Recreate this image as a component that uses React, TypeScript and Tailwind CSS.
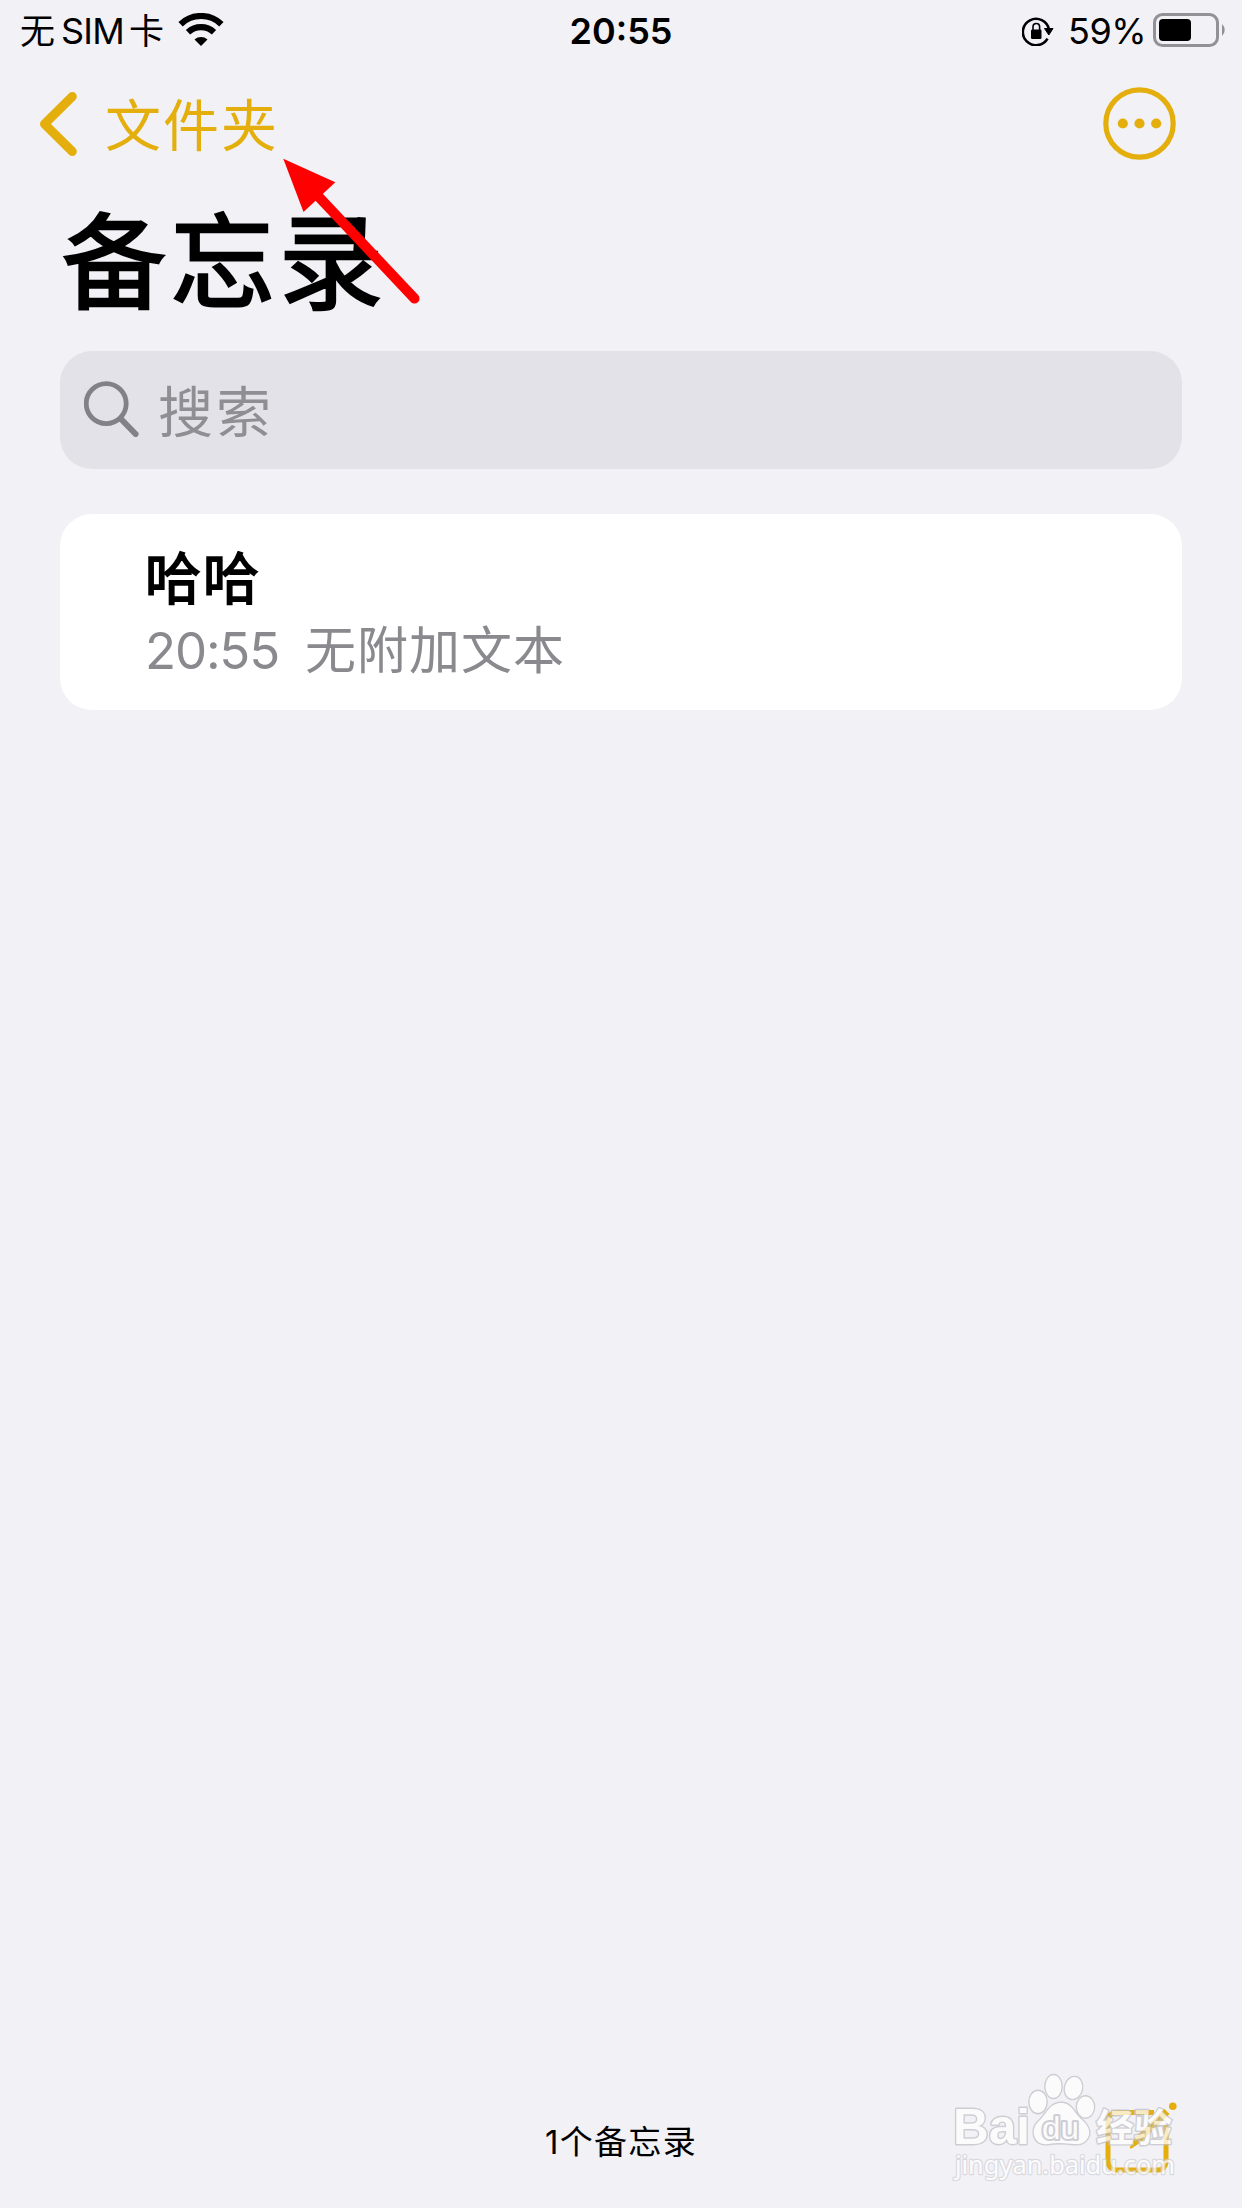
const StatusBar = () => {
	return (
		<div className="relative flex h-[62px] w-full items-center justify-between pl-5 pr-[15px] text-black">
			<div className="flex items-center">
				<span className="pt-px text-[35px] leading-none">无</span>
				<span className="ml-[6px] text-[36px] leading-none tracking-[-0.8px]">SIM</span>
				<span className="ml-[5px] pt-px text-[35px] leading-none">卡</span>
				<svg className="ml-[14px] -mt-[2px]" width="46" height="34" viewBox="0 0 46 34">
					<path d="M2.6 11.2a29.5 29.5 0 0 1 40.8 0" fill="none" stroke="#000" strokeWidth="6.2" />
					<path d="M10 19.2a19 19 0 0 1 26 0" fill="none" stroke="#000" strokeWidth="6.2" />
					<path d="M16.5 26.4a10.4 10.4 0 0 1 13 0L23 33Z" fill="#000" />
				</svg>
			</div>
			<div className="flex items-center">
				<svg width="32" height="30" viewBox="0 0 32 30">
					<path d="M25.5 22.6A13.2 13.2 0 1 1 27 13.5" fill="none" stroke="#000" strokeWidth="2.6" />
					<path d="M22.5 12.5H31L26.8 19Z" fill="#000" stroke="#000" strokeLinejoin="round" />
					<rect x="9" y="13.5" width="10.5" height="9.5" rx="1.2" fill="#000" />
					<path d="M11 14v-3.2a3.3 3.3 0 0 1 6.6 0V14" fill="none" stroke="#000" strokeWidth="1.6" />
				</svg>
				<span className="ml-[14px] w-[79px] whitespace-nowrap text-[36px] leading-none tracking-[-0.5px]">
					59%
				</span>
				<svg className="ml-[6px] -mt-[2px]" width="74" height="34" viewBox="0 0 74 34">
					<rect x="1.5" y="1.5" width="63" height="31" rx="8" fill="none" stroke="#929195" strokeWidth="3" />
					<rect x="6" y="6" width="32" height="22" rx="4" fill="#000" />
					<path d="M69 11v12a8 8 0 0 0 0-12Z" fill="#929195" />
				</svg>
			</div>
			<span className="absolute left-1/2 top-1/2 -translate-x-1/2 -translate-y-1/2 text-[36px] font-semibold leading-none">
				20:55
			</span>
		</div>
	);
};

const NavBar = () => {
	return (
		<div className="flex h-[124px] items-center justify-between pl-10 pr-[66px] text-[#e4af0c]">
			<div className="flex items-center">
				<svg width="38" height="64" viewBox="0 0 38 64">
					<path
						d="M32.3 4.5 4.5 32l27.8 27.5"
						fill="none"
						stroke="currentColor"
						strokeWidth="9"
						strokeLinecap="round"
						strokeLinejoin="round"
					/>
				</svg>
				<span className="ml-[27px] pt-[4px] text-[56px] leading-none tracking-[2px]">文件夹</span>
			</div>
			<svg className="-mt-px" width="73" height="73" viewBox="0 0 73 73">
				<circle cx="36.5" cy="36.5" r="33.7" fill="none" stroke="currentColor" strokeWidth="5.2" />
				<circle cx="19.8" cy="36.5" r="5.1" fill="currentColor" />
				<circle cx="36.5" cy="36.5" r="5.1" fill="currentColor" />
				<circle cx="53.2" cy="36.5" r="5.1" fill="currentColor" />
			</svg>
		</div>
	);
};

const Pointer = () => {
	return (
		<svg className="absolute left-[280px] top-[155px]" width="144" height="152" viewBox="0 0 144 152">
			<path d="m3.3 3.8 52 23.5L23.5 57Z" fill="#f00" />
			<path d="M38 41 134.5 143.5" stroke="#f00" strokeWidth="10" strokeLinecap="round" />
		</svg>
	);
};

const Watermark = () => {
	return (
		<svg className="absolute left-[930px] top-[2050px] opacity-75" width="270" height="158" viewBox="0 0 270 158">
			<g
				fill="#fff"
				stroke="#c2c2c8"
				strokeWidth="2.8"
				strokeLinejoin="round"
				paintOrder="stroke"
				fontFamily="'Liberation Sans', 'Noto Sans CJK SC', sans-serif"
			>
				<ellipse cx="108" cy="52" rx="8.5" ry="11" />
				<ellipse cx="123.5" cy="36.5" rx="8" ry="11.3" />
				<ellipse cx="143.5" cy="38" rx="8.5" ry="11" transform="rotate(12 143.5 38)" />
				<ellipse cx="155.5" cy="57" rx="8.5" ry="10.5" />
				<path d="M131 53c-11 0-14 10-20 16-6 5-8 10-7 15 1 8 7 11 14 10 6-1 9-1 13-1s8 1 14 1c7 1 12-3 14-9 1-6-2-11-8-16-7-6-9-16-20-16Z" />
				<text x="23" y="93.5" fontSize="50" fontWeight="700" textLength="77" lengthAdjust="spacingAndGlyphs">
					Bai
				</text>
				<text
					x="112"
					y="89"
					fontSize="32"
					strokeWidth="4"
					textLength="37"
					lengthAdjust="spacingAndGlyphs"
				>
					du
				</text>
				<text x="166" y="91" fontSize="38" fontWeight="700" textLength="76" lengthAdjust="spacingAndGlyphs">
					经验
				</text>
				<text
					x="25"
					y="123.5"
					fontSize="25"
					strokeWidth="2.4"
					stroke="#d2d2d7"
					fontFamily="'Noto Sans', sans-serif"
					textLength="220"
					lengthAdjust="spacingAndGlyphs"
				>
					jingyan.baidu.com
				</text>
			</g>
		</svg>
	);
};

const App = () => {
	return (
		<div className="relative flex h-[2208px] w-[1242px] flex-col overflow-hidden bg-[#f2f1f6] font-[Inter,'Noto_Sans_CJK_SC',sans-serif]">
			<StatusBar />
			<NavBar />
			<h1 className="flex h-[150px] items-center pl-[62px] pt-[3px] text-[104px] font-normal leading-none tracking-[4.5px] text-black [-webkit-text-stroke:2.6px_black]">
				备忘录
			</h1>

			<div className="mx-[60px] mt-[15px] flex h-[118px] items-center rounded-[32px] bg-[#e3e2e8] pl-6">
				<svg className="-mt-[2px]" width="56" height="56" viewBox="0 0 56 56">
					<circle cx="22.2" cy="22.6" r="20" fill="none" stroke="#828187" strokeWidth="4.8" />
					<path d="M37 38 51.6 53" stroke="#828187" strokeWidth="6" strokeLinecap="round" />
				</svg>
				<span className="ml-[18px] pt-[4px] text-[55px] leading-none tracking-[3px] text-[#8f8e93]">搜索</span>
			</div>

			<div className="mx-[60px] mt-[45px] flex h-[196px] flex-col rounded-[32px] bg-white pl-[85px] pt-[35px]">
				<p className="text-[56px] font-normal leading-[60px] tracking-[2px] text-black [-webkit-text-stroke:1.8px_black]">
					哈哈
				</p>
				<p className="mt-3 flex text-[51px] leading-[60px] text-[#8a898e]">
					<span className="w-[160px] tracking-[-1.2px]">20:55</span>
					<span className="tracking-[1px]">无附加文本</span>
				</p>
			</div>

			<div className="mt-auto flex h-[134px] items-center justify-center pt-[3px] text-[33px] leading-none tracking-[1.3px] text-black">
				1个备忘录
			</div>
			<svg className="absolute left-[1100px] top-[2098px]" width="82" height="80" viewBox="0 0 82 80">
				<path
					d="M54 14.5H16a8 8 0 0 0-8 8V64a8 8 0 0 0 8 8h42a8 8 0 0 0 8-8V27"
					fill="none"
					stroke="#e4af0c"
					strokeWidth="5"
				/>
				<path d="m64.5 11 5 5-29 28.500-9 6q-2 .5-1.500-1.500l5-9.500Z" fill="#e4af0c" />
				<circle cx="72.8" cy="8.2" r="3.8" fill="#e4af0c" />
			</svg>
			<Watermark />
			<Pointer />
		</div>
	);
};

export default App;
